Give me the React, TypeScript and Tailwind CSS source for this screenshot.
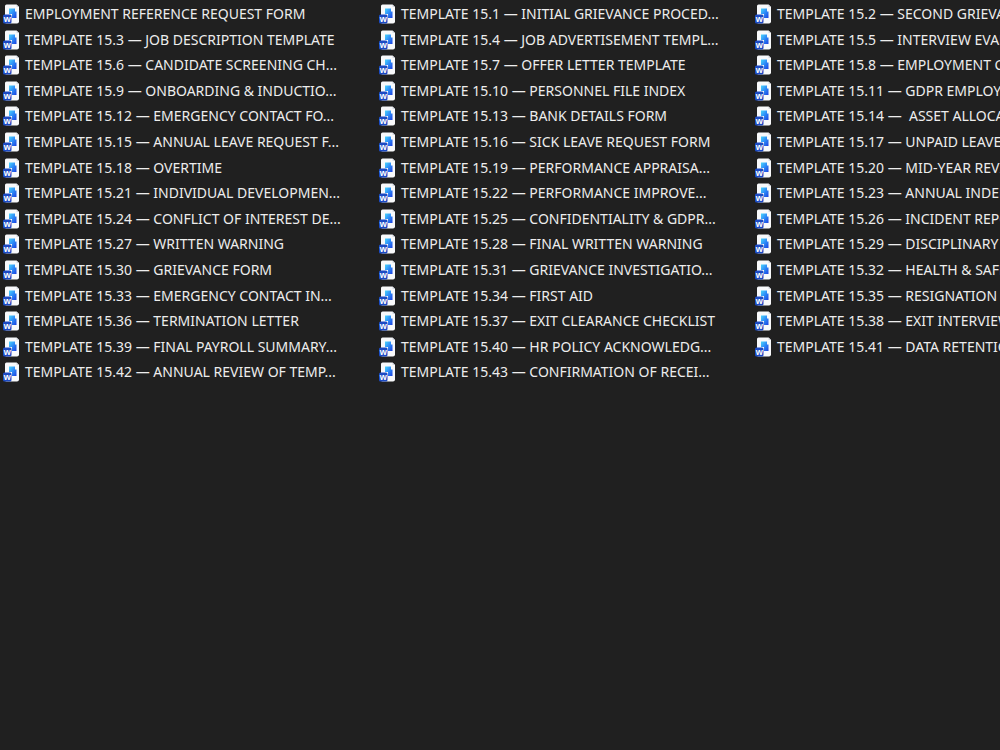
import { useId } from 'react';

const files = [
  'EMPLOYMENT REFERENCE REQUEST FORM',
  'TEMPLATE 15.1 — INITIAL GRIEVANCE PROCED...',
  'TEMPLATE 15.2 — SECOND GRIEVANCE',
  'TEMPLATE 15.3 — JOB DESCRIPTION TEMPLATE',
  'TEMPLATE 15.4 — JOB ADVERTISEMENT TEMPL...',
  'TEMPLATE 15.5 — INTERVIEW EVALUATION',
  'TEMPLATE 15.6 — CANDIDATE SCREENING CH...',
  'TEMPLATE 15.7 — OFFER LETTER TEMPLATE',
  'TEMPLATE 15.8 — EMPLOYMENT CONTRACT',
  'TEMPLATE 15.9 — ONBOARDING & INDUCTIO...',
  'TEMPLATE 15.10 — PERSONNEL FILE INDEX',
  'TEMPLATE 15.11 — GDPR EMPLOYEE',
  'TEMPLATE 15.12 — EMERGENCY CONTACT FO...',
  'TEMPLATE 15.13 — BANK DETAILS FORM',
  'TEMPLATE 15.14 —  ASSET ALLOCATION',
  'TEMPLATE 15.15 — ANNUAL LEAVE REQUEST F...',
  'TEMPLATE 15.16 — SICK LEAVE REQUEST FORM',
  'TEMPLATE 15.17 — UNPAID LEAVE REQUEST',
  'TEMPLATE 15.18 — OVERTIME',
  'TEMPLATE 15.19 — PERFORMANCE APPRAISA...',
  'TEMPLATE 15.20 — MID-YEAR REVIEW',
  'TEMPLATE 15.21 — INDIVIDUAL DEVELOPMEN...',
  'TEMPLATE 15.22 — PERFORMANCE IMPROVE...',
  'TEMPLATE 15.23 — ANNUAL INDEPENDENT',
  'TEMPLATE 15.24 — CONFLICT OF INTEREST DE...',
  'TEMPLATE 15.25 — CONFIDENTIALITY & GDPR...',
  'TEMPLATE 15.26 — INCIDENT REPORT',
  'TEMPLATE 15.27 — WRITTEN WARNING',
  'TEMPLATE 15.28 — FINAL WRITTEN WARNING',
  'TEMPLATE 15.29 — DISCIPLINARY HEARING',
  'TEMPLATE 15.30 — GRIEVANCE FORM',
  'TEMPLATE 15.31 — GRIEVANCE INVESTIGATIO...',
  'TEMPLATE 15.32 — HEALTH & SAFETY',
  'TEMPLATE 15.33 — EMERGENCY CONTACT IN...',
  'TEMPLATE 15.34 — FIRST AID',
  'TEMPLATE 15.35 — RESIGNATION — LETTER',
  'TEMPLATE 15.36 — TERMINATION LETTER',
  'TEMPLATE 15.37 — EXIT CLEARANCE CHECKLIST',
  'TEMPLATE 15.38 — EXIT INTERVIEW FORM',
  'TEMPLATE 15.39 — FINAL PAYROLL SUMMARY...',
  'TEMPLATE 15.40 — HR POLICY ACKNOWLEDG...',
  'TEMPLATE 15.41 — DATA RETENTION',
  'TEMPLATE 15.42 — ANNUAL REVIEW OF TEMP...',
  'TEMPLATE 15.43 — CONFIRMATION OF RECEI...',
];

function WordIcon() {
  const id = useId();
  return (
    <svg width="17" height="20" viewBox="0 0 17 20" className="shrink-0" aria-hidden="true">
      <defs>
        <linearGradient id={id} x1="0" y1="0" x2="1" y2="1">
          <stop offset="0" stopColor="#4cd6fb" />
          <stop offset="0.45" stopColor="#2f90f8" />
          <stop offset="1" stopColor="#1b3fe0" />
        </linearGradient>
      </defs>
      <path
        d="M3.500 .5h10l2.500 2.500v14.500a2 2 0 0 1-2 2H3.500a1.500 1.500 0 0 1-1.500-1.500v-16a1.500 1.500 0 0 1 1.500-1.500z"
        fill="#f8f9fb"
      />
      <path d="M13.500 .5l2.500 2.500h-2a.5.5 0 0 1-.5-.5z" fill="#d5d9e2" />
      <path d="M6 4.500h6v3h1.500v6.500H9V10H6z" fill={`url(#${id})`} />
      <rect x="0" y="10.500" width="8.500" height="9" rx="1.500" fill="#1c4bc4" />
      <text
        x="4.250"
        y="17.500"
        textAnchor="middle"
        fontFamily="Liberation Sans, sans-serif"
        fontSize="9"
        fontWeight="700"
        fill="#fff"
      >
        w
      </text>
    </svg>
  );
}

export default function App() {
  return (
    <main className="min-h-screen overflow-x-hidden bg-[#202020] pt-px pl-[3px] font-['Noto_Sans',sans-serif] text-[14px] leading-5 text-[#ededed]">
      <ul className="grid auto-rows-[26px_25px_26px_25px_26px] grid-cols-[repeat(3,376px)]">
        {files.map((name) => (
          <li key={name} className="flex items-center gap-[5px] whitespace-pre">
            <WordIcon />
            <span>{name}</span>
          </li>
        ))}
      </ul>
    </main>
  );
}
